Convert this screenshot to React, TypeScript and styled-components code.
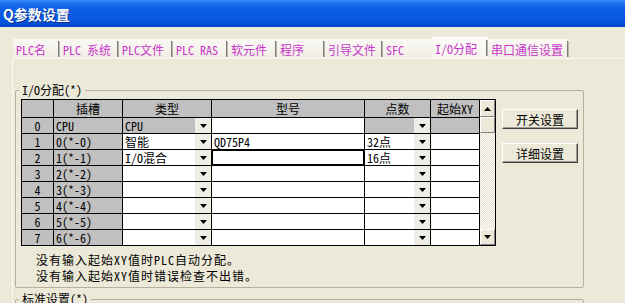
import React from "react";
import styled, { createGlobalStyle } from "styled-components";

const GlobalStyle = createGlobalStyle`
  html, body {
    margin: 0;
    padding: 0;
    background: #ece9d8;
  }
  body {
    font-family: "Noto Sans Mono CJK SC", "Noto Sans CJK SC", sans-serif;
    font-size: 12px;
    color: #000;
  }
`;

const Window = styled.div`
  width: 625px;
  height: 303px;
  overflow: hidden;
  background: #ece9d8;
  display: flex;
  flex-direction: column;
`;

const TitleBar = styled.div`
  flex: none;
  height: 27px;
  display: flex;
  align-items: center;
  padding-left: 3px;
  background: linear-gradient(
    180deg,
    #3a8bf7 0%,
    #1a6cee 14%,
    #0a5ce6 40%,
    #0657e2 75%,
    #0047c6 100%
  );
  color: #fff;
  font: bold 14px "Noto Sans CJK SC", sans-serif;
  text-shadow: 1px 1px 0 #0b2f8a;
`;

const Body = styled.div`
  flex: 1;
  display: flex;
  flex-direction: column;
  padding: 11px 0 0 12px;
`;

const TabStrip = styled.div`
  display: flex;
  align-items: flex-end;
  height: 20px;
  padding-left: 1px;
`;

const Tab = styled.div<{ $w: number; $active?: boolean }>`
  width: ${(p) => p.$w}px;
  height: ${(p) => (p.$active ? 21 : 19)}px;
  display: flex;
  align-items: center;
  background: ${(p) =>
    p.$active
      ? "linear-gradient(180deg, #fcfcfa, #f6f5ef)"
      : "linear-gradient(180deg, #faf9f5, #f0eee5)"};
  color: #c936c9;
  font-size: 12px;
`;

const TabLabel = styled.span`
  flex: 1;
  padding-left: 3px;
  white-space: pre;
  line-height: 16px;
  padding-top: 2px;
`;

const TabSep = styled.span`
  width: 2px;
  height: 16px;
  background: linear-gradient(90deg, #7d7b72 50%, #b9b7ab 50%);
`;

const Page = styled.div`
  flex: 1;
  border-top: 1px solid #f9f8f3;
  border-left: 1px solid #f9f8f3;
  padding: 23px 0 0 2px;
`;

const Group = styled.fieldset<{ $h?: number }>`
  box-sizing: border-box;
  width: 569px;
  min-width: 0;
  margin: 0;
  padding: 1px 0 3px 5px;
  border: 1px solid #b4b1a1;
  border-radius: 2px;
  ${(p) => (p.$h ? `height: ${p.$h}px;` : "")}
  & + & {
    margin-top: 3px;
  }
`;

const Legend = styled.legend`
  margin-left: -2px;
  padding: 0 3px;
  line-height: 16px;
  font-size: 12px;
`;

const TopRow = styled.div`
  display: flex;
  align-items: flex-start;
`;

const Frame = styled.div`
  display: flex;
  border: 1px solid #000;
`;

const Grid = styled.div`
  display: grid;
  grid-template-columns: 31px 68px 88px 152px 65px 48px;
  grid-template-rows: 17px repeat(8, 15px);
  gap: 1px;
  background: #000;
`;

const Cell = styled.div<{ $gray?: boolean; $center?: boolean; $edit?: boolean }>`
  display: flex;
  align-items: center;
  justify-content: ${(p) => (p.$center ? "center" : "flex-start")};
  padding-left: ${(p) => (p.$center ? 0 : 2)}px;
  background: ${(p) => (p.$gray ? "#c0c0c0" : "#fff")};
  box-shadow: ${(p) => (p.$edit ? "inset 0 0 0 1px #000" : "none")};
  line-height: 15px;
  white-space: nowrap;
  overflow: hidden;
  font-size: 12px;
`;

const HeadCell = styled(Cell)`
  line-height: 17px;
`;

const CellText = styled.span`
  flex: 1;
  overflow: hidden;
`;

const DropBtn = styled.span`
  flex: none;
  width: 16px;
  height: 15px;
  display: flex;
  align-items: center;
  justify-content: center;
  background: #efeee6;
  padding-top: 1px;
  box-sizing: border-box;
`;

const ScrollBar = styled.div`
  width: 15px;
  border-left: 1px solid #000;
  display: flex;
  flex-direction: column;
`;

const ScrollBtn = styled.div<{ $h: number }>`
  height: ${(p) => p.$h}px;
  box-sizing: border-box;
  display: flex;
  align-items: center;
  justify-content: center;
  background: #ece9d8;
  border: 1px solid;
  border-color: #fff #808080 #808080 #fff;
`;

const Track = styled.div`
  flex: 1;
  background: repeating-conic-gradient(#fbfaf6 0 25%, #e6e3d3 0 50%) 0 0 / 2px 2px;
`;

const ButtonCol = styled.div`
  display: flex;
  flex-direction: column;
  gap: 14px;
  margin-left: 6px;
  padding-top: 10px;
`;

const Button = styled.button`
  width: 76px;
  height: 20px;
  padding: 0;
  font: 12px "Noto Sans Mono CJK SC", "Noto Sans CJK SC", sans-serif;
  color: #000;
  background: #ece9d8;
  border: 1px solid;
  border-color: #fff #404040 #404040 #fff;
  box-shadow: inset -1px -1px 0 #a09e94;
`;

const Notes = styled.div`
  margin: 6px 0 0 15px;
  font-size: 12px;
  letter-spacing: 1px;
  line-height: 16px;
`;

const Arrow = ({ up }: { up?: boolean }) => (
  <svg width="7" height="4" viewBox="0 0 7 4">
    <path d={up ? "M3.5 0L7 4H0z" : "M0 0h7L3.5 4z"} fill="#000" />
  </svg>
);

const tabs = [
  { label: "PLC名", w: 47 },
  { label: "PLC 系统", w: 59 },
  { label: "PLC文件", w: 54 },
  { label: "PLC RAS", w: 55 },
  { label: "软元件", w: 49 },
  { label: "程序", w: 48 },
  { label: "引导文件", w: 58 },
  { label: "SFC", w: 49, noSep: true },
  { label: "I/O分配", w: 56, active: true },
  { label: "串口通信设置", w: 81 },
];

type Row = {
  slot: string;
  type?: string;
  model?: string;
  points?: string;
  cpu?: boolean;
  editing?: boolean;
};

const rows: Row[] = [
  { slot: "CPU", type: "CPU", cpu: true },
  { slot: "0(*-0)", type: "智能", model: "QD75P4", points: "32点" },
  { slot: "1(*-1)", type: "I/O混合", points: "16点", editing: true },
  { slot: "2(*-2)" },
  { slot: "3(*-3)" },
  { slot: "4(*-4)" },
  { slot: "5(*-5)" },
  { slot: "6(*-6)" },
];

const heads = ["", "插槽", "类型", "型号", "点数", "起始XY"];

const App = () => {
  return (
    <Window>
      <GlobalStyle />
      <TitleBar>Q参数设置</TitleBar>
      <Body>
        <TabStrip>
          {tabs.map((t) => (
            <Tab key={t.label} $w={t.w} $active={t.active}>
              <TabLabel>{t.label}</TabLabel>
              {!t.noSep && <TabSep />}
            </Tab>
          ))}
        </TabStrip>
        <Page>
          <Group>
            <Legend>I/O分配(*)</Legend>
            <TopRow>
              <Frame>
                <Grid>
                  {heads.map((h, i) => (
                    <HeadCell key={"h" + i} $gray $center>
                      {h}
                    </HeadCell>
                  ))}
                  {rows.map((r, i) => (
                    <React.Fragment key={i}>
                      <Cell $gray $center>
                        {i}
                      </Cell>
                      <Cell $gray>{r.slot}</Cell>
                      <Cell $gray={r.cpu}>
                        <CellText>{r.type}</CellText>
                        <DropBtn>
                          <Arrow />
                        </DropBtn>
                      </Cell>
                      <Cell $edit={r.editing}>{r.model}</Cell>
                      <Cell $gray={r.cpu}>
                        <CellText>{r.points}</CellText>
                        <DropBtn>
                          <Arrow />
                        </DropBtn>
                      </Cell>
                      <Cell $gray={r.cpu} />
                    </React.Fragment>
                  ))}
                </Grid>
                <ScrollBar>
                  <ScrollBtn $h={17}>
                    <Arrow up />
                  </ScrollBtn>
                  <ScrollBtn $h={16} />
                  <Track />
                  <ScrollBtn $h={16}>
                    <Arrow />
                  </ScrollBtn>
                </ScrollBar>
              </Frame>
              <ButtonCol>
                <Button>开关设置</Button>
                <Button>详细设置</Button>
              </ButtonCol>
            </TopRow>
            <Notes>
              <div>没有输入起始XY值时PLC自动分配。</div>
              <div>没有输入起始XY值时错误检查不出错。</div>
            </Notes>
          </Group>
          <Group $h={60}>
            <Legend>标准设置(*)</Legend>
          </Group>
        </Page>
      </Body>
    </Window>
  );
};

export default App;
